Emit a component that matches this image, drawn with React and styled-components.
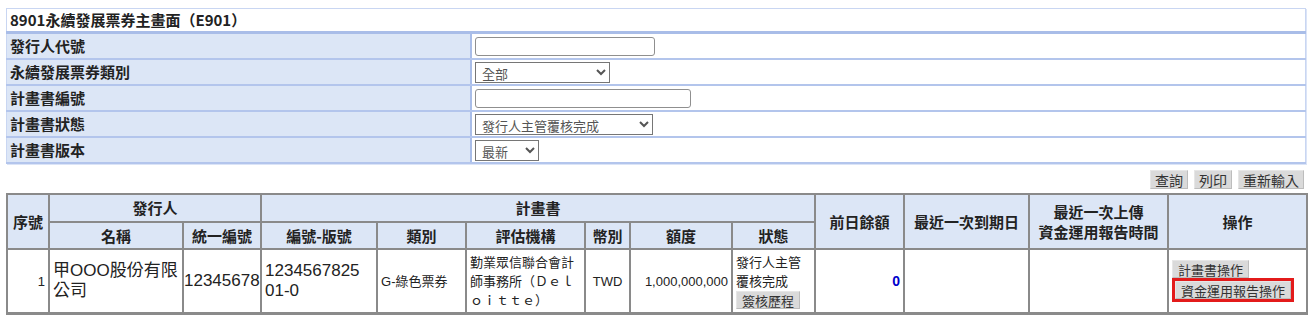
import React from "react";
import styled, { createGlobalStyle } from "styled-components";

const GlobalStyle = createGlobalStyle`
  body {
    margin: 0;
    padding: 8px 6px;
    background: #fff;
    font-family: "Liberation Sans", "Noto Sans CJK TC", sans-serif;
    color: #222;
  }
`;

const QueryTable = styled.table`
  width: 1300px;
  border-collapse: collapse;
  border: 1px solid #c9d6f2;
  box-shadow: 1px 1px 0 #dbe4f7;
  td {
    padding: 0 3px;
    font-family: "Noto Sans CJK TC", sans-serif;
    font-size: 15px;
    line-height: 18px;
  }
`;

const TitleCell = styled.td`
  height: 22px;
  background: #fff;
  font-weight: bold;
  border-bottom: 3px solid #a9bde8;
`;

const LabelCell = styled.td`
  width: 457px;
  height: 24px;
  background: #dce6f6;
  font-weight: bold;
  border-bottom: 2px solid #b3c5ec;
  border-right: 2px solid #a9bde8;
`;

const ValueCell = styled.td`
  height: 24px;
  background: #fff;
  border-bottom: 2px solid #b3c5ec;
`;

const TextInput = styled.input`
  box-sizing: border-box;
  width: ${(p) => p.$w}px;
  height: 19px;
  border: 1px solid #8f8f8f;
  border-radius: 3px;
  display: block;
`;

const Select = styled.select`
  box-sizing: border-box;
  width: ${(p) => p.$w}px;
  height: 21px;
  border: 1px solid #767676;
  border-radius: 0;
  font-family: "Noto Sans CJK TC", sans-serif;
  font-size: 13px;
  color: #555;
  background: #fff;
  padding: 0 2px;
  display: block;
`;

const Toolbar = styled.div`
  display: flex;
  justify-content: flex-end;
  gap: 6px;
  width: 1298px;
  margin: 6px 0 4px;
`;

const GrayButton = styled.button`
  background: #dadada;
  border: 1px solid #e6e6e6;
  border-bottom-color: #bdbdbd;
  border-right-color: #bdbdbd;
  font-family: "Noto Sans CJK TC", sans-serif;
  font-size: ${(p) => (p.$small ? 13 : 14)}px;
  color: #333;
  height: ${(p) => (p.$small ? 18 : 19)}px;
  padding: 0 ${(p) => (p.$small ? 5 : 4)}px;
  line-height: 1;
  cursor: pointer;
  white-space: nowrap;
`;

const Highlight = styled.div`
  display: inline-block;
  border: 3px solid #e31b1b;
  line-height: 0;
`;

const ListTable = styled.table`
  width: 1300px;
  table-layout: fixed;
  border-collapse: separate;
  border-spacing: 0;
  border: 1px solid #8a8a8a;
  border-bottom-width: 2px;
  th, td {
    border: 1px solid #8a8a8a;
    padding: 0 3px;
  }
`;

const HeadCell = styled.th`
  background: #dce6f6;
  font-family: "Noto Sans CJK TC", sans-serif;
  font-weight: bold;
  font-size: 15px;
  line-height: 20px;
  color: #222;
  height: ${(p) => p.$h || 25}px;
  text-align: center;
`;

const DataCell = styled.td`
  height: 62px;
  font-family: "Liberation Sans", "Noto Sans CJK TC", sans-serif;
  font-size: ${(p) => (p.$big ? 17 : 13)}px;
  line-height: ${(p) => (p.$big ? 20 : 19)}px;
  text-align: ${(p) => p.$align || "left"};
  vertical-align: middle;
  word-break: ${(p) => (p.$break ? "break-all" : "normal")};
  color: #222;
  && {
    padding-right: ${(p) => p.$pr ?? 3}px;
  }
`;

const Amount = styled.span`
  color: #0000cc;
  font-weight: bold;
  font-size: 14px;
`;

const Stack = styled.div`
  display: flex;
  flex-direction: column;
  align-items: flex-start;
`;

const widths = [42, 134, 78, 116, 89, 119, 45, 102, 83, 89, 125, 139, 139];

const fields = [
  { label: "發行人代號", control: <TextInput $w={180} /> },
  {
    label: "永續發展票券類別",
    control: (
      <Select $w={135}>
        <option>全部</option>
      </Select>
    ),
  },
  { label: "計畫書編號", control: <TextInput $w={216} /> },
  {
    label: "計畫書狀態",
    control: (
      <Select $w={178}>
        <option>發行人主管覆核完成</option>
      </Select>
    ),
  },
  {
    label: "計畫書版本",
    control: (
      <Select $w={64}>
        <option>最新</option>
      </Select>
    ),
  },
];

export default function App() {
  return (
    <>
      <GlobalStyle />
      <QueryTable>
        <tbody>
          <tr>
            <TitleCell colSpan={2}>8901永續發展票券主畫面（E901）</TitleCell>
          </tr>
          {fields.map((f) => (
            <tr key={f.label}>
              <LabelCell>{f.label}</LabelCell>
              <ValueCell>{f.control}</ValueCell>
            </tr>
          ))}
        </tbody>
      </QueryTable>

      <Toolbar>
        <GrayButton>查詢</GrayButton>
        <GrayButton>列印</GrayButton>
        <GrayButton>重新輸入</GrayButton>
      </Toolbar>

      <ListTable>
        <colgroup>
          {widths.map((w, i) => (
            <col key={i} style={{ width: w }} />
          ))}
        </colgroup>
        <thead>
          <tr>
            <HeadCell rowSpan={2}>序號</HeadCell>
            <HeadCell colSpan={2} $h={26}>發行人</HeadCell>
            <HeadCell colSpan={6}>計畫書</HeadCell>
            <HeadCell rowSpan={2}>前日餘額</HeadCell>
            <HeadCell rowSpan={2}>最近一次到期日</HeadCell>
            <HeadCell rowSpan={2}>
              最近一次上傳
              <br />
              資金運用報告時間
            </HeadCell>
            <HeadCell rowSpan={2}>操作</HeadCell>
          </tr>
          <tr>
            <HeadCell>名稱</HeadCell>
            <HeadCell>統一編號</HeadCell>
            <HeadCell>編號-版號</HeadCell>
            <HeadCell>類別</HeadCell>
            <HeadCell>評估機構</HeadCell>
            <HeadCell>幣別</HeadCell>
            <HeadCell>額度</HeadCell>
            <HeadCell>狀態</HeadCell>
          </tr>
        </thead>
        <tbody>
          <tr>
            <DataCell $align="right">1</DataCell>
            <DataCell $big>甲OOO股份有限公司</DataCell>
            <DataCell $big style={{ padding: 0 }}>12345678</DataCell>
            <DataCell $big $break $pr={12}>123456782501-0</DataCell>
            <DataCell>G-綠色票券</DataCell>
            <DataCell $break>勤業眾信聯合會計師事務所（Ｄｅｌｏｉｔｔｅ）</DataCell>
            <DataCell $align="center">TWD</DataCell>
            <DataCell $align="right">1,000,000,000</DataCell>
            <DataCell>
              <Stack>
                <span>發行人主管覆核完成</span>
                <GrayButton $small>簽核歷程</GrayButton>
              </Stack>
            </DataCell>
            <DataCell $align="right">
              <Amount>0</Amount>
            </DataCell>
            <DataCell />
            <DataCell />
            <DataCell>
              <Stack>
                <GrayButton $small>計畫書操作</GrayButton>
                <Highlight>
                  <GrayButton $small>資金運用報告操作</GrayButton>
                </Highlight>
              </Stack>
            </DataCell>
          </tr>
        </tbody>
      </ListTable>
    </>
  );
}
